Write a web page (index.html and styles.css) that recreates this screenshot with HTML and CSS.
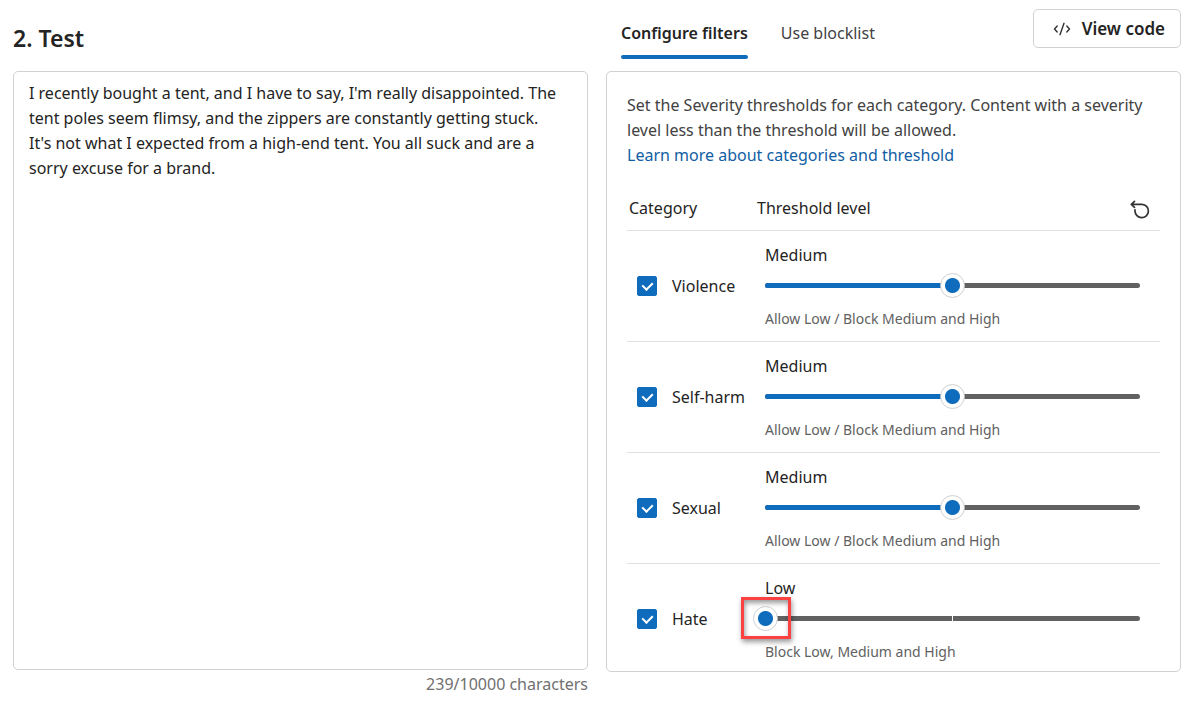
FILE: index.html
```html
<!DOCTYPE html>
<html lang="en">
<head>
<meta charset="utf-8">
<meta name="viewport" content="width=device-width, initial-scale=1">
<title>Test content filters</title>
<link rel="stylesheet" href="styles.css">
</head>
<body>
<main class="page">
  <section class="column">
    <header class="bar">
      <h1 class="title" id="test-title">2. Test</h1>
    </header>
    <textarea class="prompt" aria-labelledby="test-title" maxlength="10000" spellcheck="false">I recently bought a tent, and I have to say, I'm really disappointed. The tent poles seem flimsy, and the zippers are constantly getting stuck. It's not what I expected from a high-end tent. You all suck and are a sorry excuse for a brand.</textarea>
    <p class="counter">239/10000 characters</p>
  </section>

  <section class="column">
    <header class="bar">
      <div class="tabs" role="tablist">
        <button class="tab tab-active" type="button" role="tab" aria-selected="true">Configure filters</button>
        <button class="tab" type="button" role="tab" aria-selected="false">Use blocklist</button>
      </div>
      <button class="view-code" type="button">
        <svg class="code-icon" viewBox="0 0 18 14" aria-hidden="true"><path d="M4.200 4 1.500 7l2.700 3M13.800 4l2.700 3-2.700 3M11 1.300 7 12.700"/></svg>
        View code
      </button>
    </header>
    <div class="panel">
      <p class="intro">Set the Severity thresholds for each category. Content with a severity level less than the threshold will be allowed.<br><a class="link" href="#">Learn more about categories and threshold</a></p>
      <table class="filters">
        <thead>
          <tr>
            <th class="category" scope="col">Category</th>
            <th scope="col">
              <div class="level-head">
                Threshold level
                <button class="reset" type="button" aria-label="Reset thresholds">
                  <svg class="reset-icon" viewBox="0 0 20 20" aria-hidden="true"><path d="M4.500 2.300 1.300 5.300 4.500 8.300M1.600 5.300H12A6.700 6.700 0 1 1 5 12V10.800"/></svg>
                </button>
              </div>
            </th>
          </tr>
        </thead>
        <tbody>
          <tr>
            <td><label class="check"><input class="box" type="checkbox" checked>Violence</label></td>
            <td class="level">
              <label class="level-name" for="violence">Medium</label>
              <div class="slider">
                <span class="track"><span class="fill" style="width: 50%"></span></span>
                <input class="range" id="violence" type="range" min="0" max="2" value="1">
              </div>
              <p class="hint">Allow Low / Block Medium and High</p>
            </td>
          </tr>
          <tr>
            <td><label class="check"><input class="box" type="checkbox" checked>Self-harm</label></td>
            <td class="level">
              <label class="level-name" for="self-harm">Medium</label>
              <div class="slider">
                <span class="track"><span class="fill" style="width: 50%"></span></span>
                <input class="range" id="self-harm" type="range" min="0" max="2" value="1">
              </div>
              <p class="hint">Allow Low / Block Medium and High</p>
            </td>
          </tr>
          <tr>
            <td><label class="check"><input class="box" type="checkbox" checked>Sexual</label></td>
            <td class="level">
              <label class="level-name" for="sexual">Medium</label>
              <div class="slider">
                <span class="track"><span class="fill" style="width: 50%"></span></span>
                <input class="range" id="sexual" type="range" min="0" max="2" value="1">
              </div>
              <p class="hint">Allow Low / Block Medium and High</p>
            </td>
          </tr>
          <tr>
            <td><label class="check"><input class="box" type="checkbox" checked>Hate</label></td>
            <td class="level">
              <label class="level-name" for="hate">Low</label>
              <div class="slider">
                <span class="track"><span class="fill" style="width: 0%"></span></span>
                <input class="range" id="hate" type="range" min="0" max="2" value="0">
                <span class="callout"></span>
              </div>
              <p class="hint">Block Low, Medium and High</p>
            </td>
          </tr>
        </tbody>
      </table>
    </div>
  </section>
</main>
</body>
</html>
```
FILE: styles.css
```css
* {
  box-sizing: border-box;
}

body {
  margin: 0;
  background: #fff;
  color: #242424;
  font: 16px/25px "Segoe UI", "Noto Sans", "Open Sans", sans-serif;
}

p, h1 {
  margin: 0;
}

button, input, textarea {
  font: inherit;
  color: inherit;
}

button {
  cursor: pointer;
}

.page {
  display: grid;
  grid-template-columns: minmax(0, 1fr) minmax(0, 1fr);
  gap: 18px;
  min-height: 100vh;
  padding: 0 13px 5px;
}

.column {
  display: flex;
  flex-direction: column;
}

.bar {
  display: flex;
  align-items: flex-start;
  justify-content: space-between;
  height: 71px;
}

.title {
  padding-top: 22px;
  font-size: 23px;
  font-weight: 600;
  line-height: 32px;
}

.prompt {
  flex: 1;
  padding: 9px 28px 9px 15px;
  border: 1px solid #d1d1d1;
  border-radius: 5px;
  background: #fff;
  outline: 0;
  resize: none;
}

.counter {
  padding-top: 2px;
  color: #707070;
  text-align: right;
}

.tabs {
  display: flex;
  gap: 33px;
  padding: 21px 0 0 15px;
}

.tab {
  padding: 0 0 9px;
  border: 0;
  background: none;
  color: #424242;
}

.tab-active {
  color: #242424;
  font-weight: 600;
}

.tab-active::after {
  content: "";
  display: block;
  height: 4px;
  margin: 9px 0 -13px;
  border-radius: 2px;
  background: #0f6cbd;
}

.view-code {
  display: flex;
  align-items: center;
  gap: 11px;
  margin-top: 9px;
  padding: 6px 15px 6px 19px;
  border: 1px solid #d1d1d1;
  border-radius: 5px;
  background: #fff;
  font-size: 17px;
  font-weight: 600;
}

.code-icon {
  width: 18px;
  height: 14px;
  fill: none;
  stroke: #333;
  stroke-width: 1.4;
  stroke-linecap: round;
  stroke-linejoin: round;
}

.panel {
  padding: 21px 20px 0;
  border: 1px solid #d1d1d1;
  border-radius: 5px;
}

.intro {
  color: #424242;
}

.link {
  color: #115ea3;
  text-decoration: none;
}

.filters {
  width: 100%;
  margin-top: 19px;
  border-collapse: separate;
  border-spacing: 0;
  table-layout: fixed;
}

.filters th {
  height: 44px;
  padding: 0;
  border-bottom: 1px solid #e0e0e0;
  font-weight: 400;
  text-align: left;
}

.filters .category {
  width: 130px;
  padding-left: 2px;
}

.level-head {
  display: flex;
  align-items: center;
  justify-content: space-between;
  padding-right: 10px;
}

.reset {
  display: flex;
  padding: 0;
  border: 0;
  background: none;
}

.reset-icon {
  width: 20px;
  height: 20px;
  fill: none;
  stroke: #333;
  stroke-width: 1.7;
  stroke-linecap: round;
  stroke-linejoin: round;
}

.filters td {
  padding: 12px 0;
  border-bottom: 1px solid #e0e0e0;
}

.filters tr:last-child td {
  padding-bottom: 9px;
  border-bottom: 0;
}

.filters .level {
  padding-left: 8px;
  padding-right: 20px;
}

.check {
  display: flex;
  align-items: center;
  gap: 15px;
  padding-left: 10px;
}

.box {
  display: grid;
  place-items: center;
  width: 20px;
  height: 20px;
  margin: 0;
  border: 1px solid #616161;
  border-radius: 2px;
  appearance: none;
}

.box:checked {
  border-color: #0f6cbd;
  background: #0f6cbd;
}

.box:checked::before {
  content: "";
  width: 5px;
  height: 8px;
  margin-bottom: 3px;
  border: solid #fff;
  border-width: 0 2px 2px 0;
  transform: rotate(45deg);
}

.level-name {
  display: block;
  line-height: 24px;
}

.slider {
  position: relative;
  display: grid;
  align-items: center;
  margin: 6px -12px 11px;
}

.track,
.range {
  grid-area: 1 / 1;
}

.track {
  height: 5px;
  margin: 0 12px;
  border-radius: 3px;
  overflow: hidden;
  background: linear-gradient(#fff, #fff) center / 1px 100% no-repeat #616161;
}

.fill {
  display: block;
  height: 100%;
  background: #0f6cbd;
}

.range {
  width: 100%;
  height: 25px;
  margin: 0;
  background: none;
  appearance: none;
}

.range::-webkit-slider-thumb {
  width: 25px;
  height: 25px;
  border: 1px solid #d1d1d1;
  border-radius: 50%;
  background: radial-gradient(circle, #0f6cbd 7px, #fff 8px);
  appearance: none;
}

/* Highlight frame round the slider thumb */
.callout {
  position: absolute;
  top: -9px;
  left: -12px;
  width: 50px;
  height: 42px;
  border: 3px solid #fb4141;
  box-shadow: 1px 3px 5px rgba(0, 0, 0, 0.4), inset 1px 3px 5px rgba(0, 0, 0, 0.4);
  pointer-events: none;
}

.hint {
  color: #616161;
  font-size: 14px;
  line-height: 20px;
}
```
